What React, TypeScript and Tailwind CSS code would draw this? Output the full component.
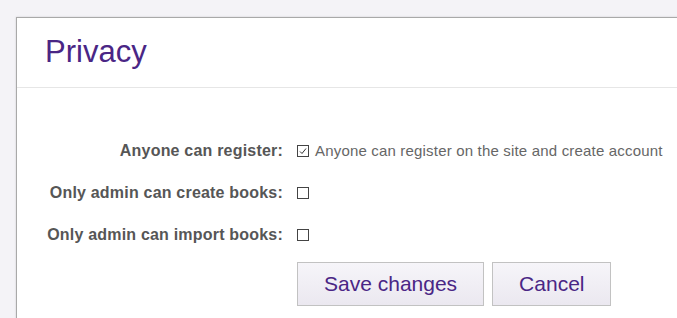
export default function App() {
  const rows = [
    { label: 'Anyone can register:', checked: true, text: 'Anyone can register on the site and create account' },
    { label: 'Only admin can create books:', checked: false, text: '' },
    { label: 'Only admin can import books:', checked: false, text: '' },
  ]

  return (
    <div className="w-[677px] h-[318px] overflow-hidden bg-[#f4f3f7] pl-[16px] pt-[17px] font-['Liberation_Sans',Arial,sans-serif]">
      <div className="w-[700px] h-[340px] bg-white border border-[#a9a9a9] shadow-[0_0_2px_rgba(0,0,0,0.15)]">
        <div className="h-[70px] border-b border-[#e6e6e6] pl-[28px] pt-[16px]">
          <h1 className="text-[31px] leading-[36px] text-[#4a2685]">Privacy</h1>
        </div>

        <div className="pt-[42px]">
          {rows.map((row) => (
            <div key={row.label} className="flex items-center h-[42px]">
              <label className="w-[266px] text-right text-[16px] font-bold tracking-[0.2px] text-[#565656]">
                {row.label}
              </label>
              <div className="ml-[14px] flex items-center">
                <span className="w-[12px] h-[12px] border border-[#444] flex items-center justify-center">
                  {row.checked && (
                    <svg width="8" height="8" viewBox="0 0 8 8">
                      <path d="M1 4.5 L3 6.5 L7 1.5" fill="none" stroke="#333" strokeWidth="1" />
                    </svg>
                  )}
                </span>
                {row.text && <span className="ml-[6px] text-[15px] tracking-[0.18px] text-[#666]">{row.text}</span>}
              </div>
            </div>
          ))}
        </div>

        <div className="flex gap-[8px] pl-[280px] pt-[6px]">
          <button className="h-[44px] px-[26px] border border-[#c2c2c2] bg-gradient-to-b from-[#f6f5f9] to-[#ebe8f0] text-[21px] text-[#4a2685]">
            Save changes
          </button>
          <button className="h-[44px] px-[26px] border border-[#c2c2c2] bg-gradient-to-b from-[#f6f5f9] to-[#ebe8f0] text-[21px] text-[#4a2685]">
            Cancel
          </button>
        </div>
      </div>
    </div>
  )
}
